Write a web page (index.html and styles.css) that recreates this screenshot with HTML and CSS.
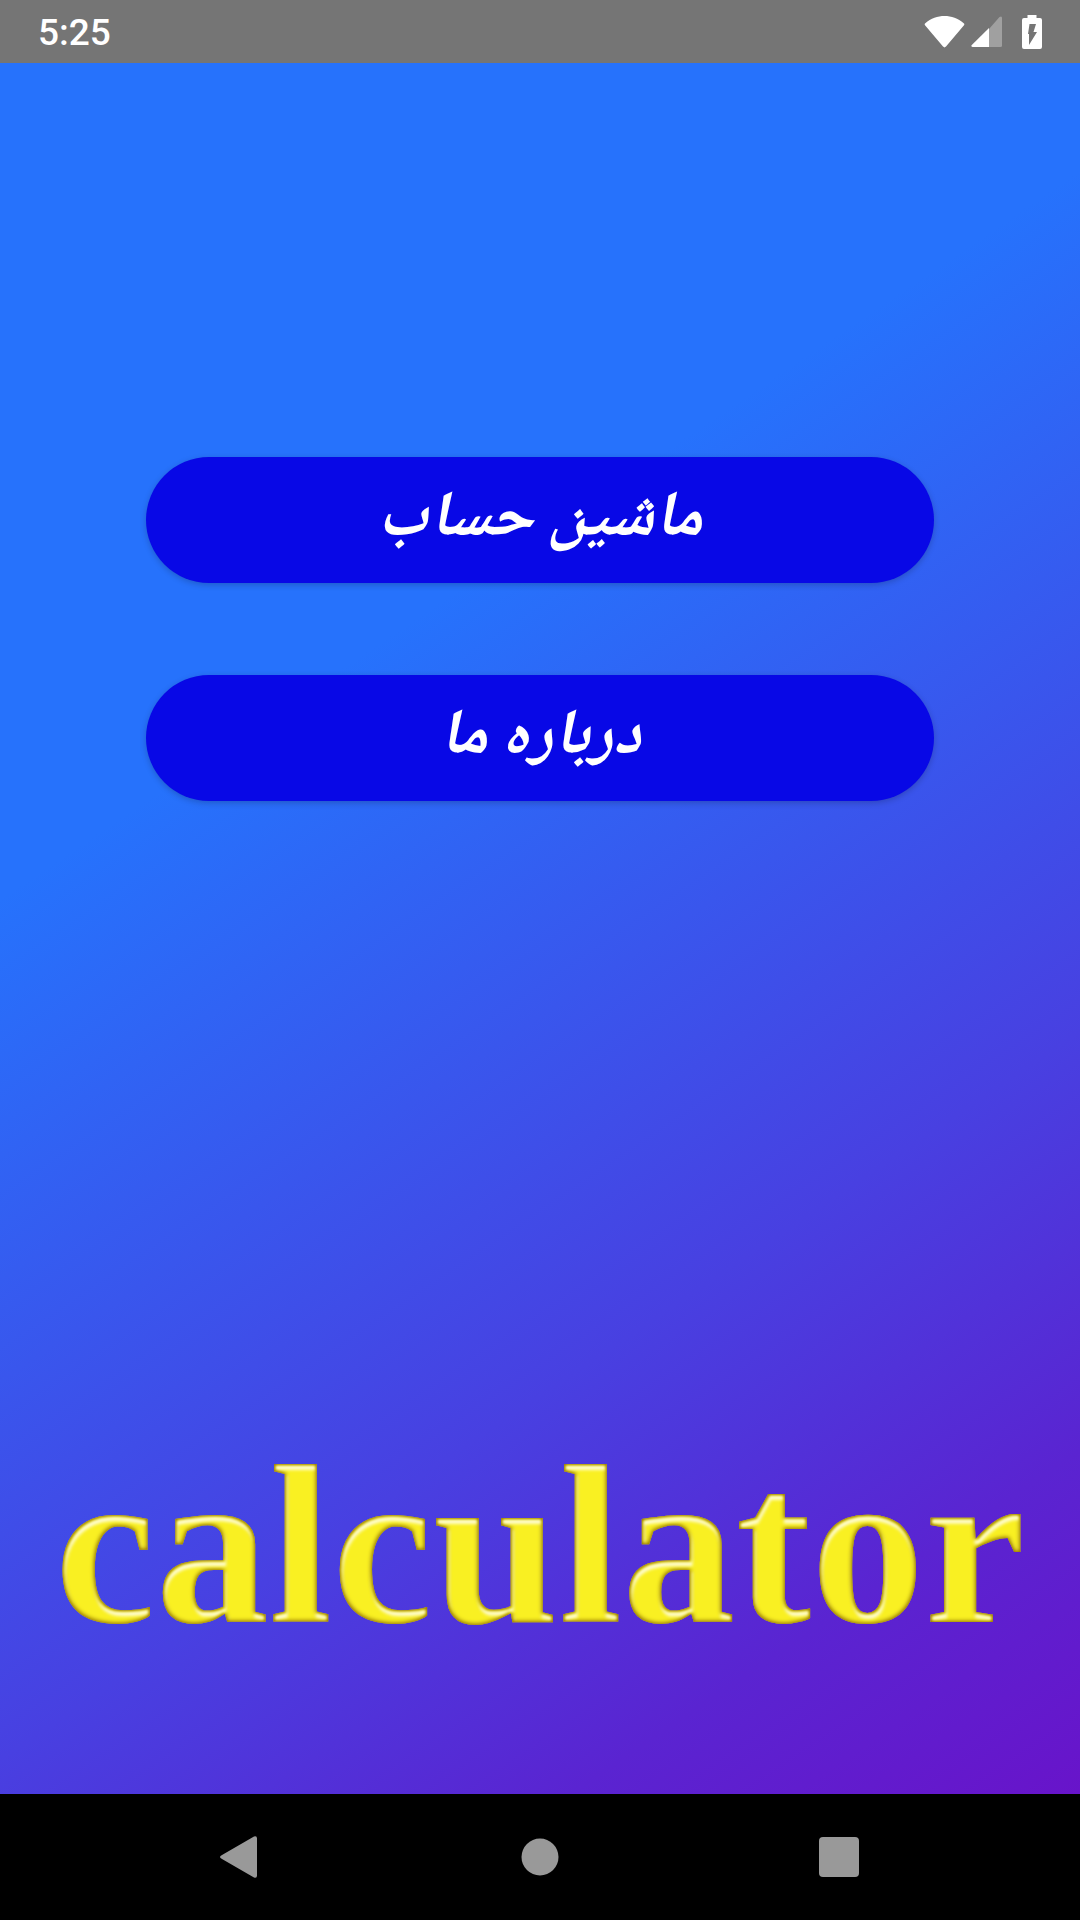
FILE: index.html
```
<!DOCTYPE html>
<html lang="fa">
<head>
    <meta charset="UTF-8">
    <meta name="viewport" content="width=device-width, initial-scale=1.0">
    <title>ماشین حساب</title>
    <link rel="stylesheet" href="styles.css">
</head>
<body>
    <header class="status-bar">
        <span class="clock">5:25</span>
        <div class="status-icons">
            <svg class="wifi" width="41" height="32" viewBox="0 0 41 32" aria-hidden="true">
                <path d="M1.2 9.6Q0 8.2 1.3 7.2C12.5 -2.3 28.5 -2.3 39.7 7.2Q41 8.2 39.8 9.6L22 30.6Q20.5 32.2 19 30.6Z" fill="#fff"/>
            </svg>
            <svg class="signal" width="31" height="32" viewBox="0 0 31 32" aria-hidden="true">
                <path d="M18 13L28.5 1Q31 -0.5 31 2V29.5Q31 31 29.5 31H18Z" fill="#a0a0a0"/>
                <path d="M18 12V31H1.5Q-0.5 30.5 0.8 29Z" fill="#fff"/>
            </svg>
            <svg class="battery" width="20" height="34" viewBox="0 0 20 34" aria-hidden="true">
                <path d="M5.5 0H14.5V3H18Q20 3 20 5V32Q20 34 18 34H2Q0 34 0 32V5Q0 3 2 3H5.5Z" fill="#fff"/>
                <path d="M7.5 9H14L11.5 17H15L7 30V19H6Z" fill="#757575"/>
            </svg>
        </div>
    </header>

    <main class="screen">
        <div class="menu" dir="rtl">
            <button class="menu-button">ماشین حساب</button>
            <button class="menu-button">درباره ما</button>
        </div>
        <h1 class="logo">calculator</h1>
    </main>

    <nav class="nav-bar">
        <button class="nav-button" aria-label="Back">
            <svg width="42" height="42" viewBox="2 0 42 42">
                <path d="M4 19L36 0.5Q39 -0.5 39 2.5V39.5Q39 42.5 36 41.5L4 23Q0 21 4 19Z"/>
            </svg>
        </button>
        <button class="nav-button" aria-label="Home">
            <svg width="38" height="38" viewBox="0 0 38 38">
                <circle cx="19" cy="19" r="18.5"/>
            </svg>
        </button>
        <button class="nav-button" aria-label="Recent apps">
            <svg width="40" height="40" viewBox="0 0 40 40">
                <rect width="40" height="40" rx="4"/>
            </svg>
        </button>
    </nav>

    <!-- bevel for the logo text -->
    <svg class="defs" width="0" height="0" aria-hidden="true">
        <filter id="bevel" x="-5%" y="-5%" width="110%" height="110%" color-interpolation-filters="sRGB">
            <!-- light along the upper edges -->
            <feMorphology in="SourceAlpha" operator="erode" radius="2" result="core"/>
            <feGaussianBlur in="core" stdDeviation="1" result="soft"/>
            <feOffset in="soft" dx="1" dy="4" result="low"/>
            <feComposite in="core" in2="low" operator="out" result="topEdge"/>
            <feFlood flood-color="#fffdd0"/>
            <feComposite in2="topEdge" operator="in"/>
            <feGaussianBlur stdDeviation="1" result="light"/>
            <!-- dark gold rim -->
            <feMorphology in="SourceAlpha" operator="erode" radius="1" result="thin"/>
            <feGaussianBlur in="thin" stdDeviation="2" result="inner"/>
            <feComposite in="SourceAlpha" in2="inner" operator="out" result="rim"/>
            <feFlood flood-color="#8c6c00"/>
            <feComposite in2="rim" operator="in" result="dark"/>
            <feMerge>
                <feMergeNode in="SourceGraphic"/>
                <feMergeNode in="dark"/>
                <feMergeNode in="light"/>
            </feMerge>
        </filter>
    </svg>
</body>
</html>
```
FILE: styles.css
```
* {
    box-sizing: border-box;
    margin: 0;
    padding: 0;
}

body {
    display: flex;
    flex-direction: column;
    min-height: 100vh;
    font-family: Roboto, sans-serif;
    background: #000;
}

button {
    border: none;
    cursor: pointer;
}

.status-bar {
    display: flex;
    justify-content: space-between;
    align-items: center;
    height: 63px;
    padding: 0 38px;
    background: #757575;
    color: #fff;
}

.clock {
    font-size: 37px;
    font-weight: 500;
    line-height: 60px;
    padding-top: 2px;
}

.status-icons {
    display: flex;
    align-items: center;
    gap: 6px;
}

.battery {
    margin-left: 14px;
}

.screen {
    flex: 1;
    display: flex;
    flex-direction: column;
    align-items: center;
    justify-content: space-between;
    padding: 394px 0 135px;
    background: linear-gradient(146deg, #2672fc 0%, #2672fc 34%, #4840e1 69%, #5a24d1 86%, #6814ca 100%);
}

.menu {
    display: flex;
    flex-direction: column;
    gap: 92px;
    width: 73%;
}

.menu-button {
    height: 126px;
    padding-top: 4px;
    border-radius: 63px;
    background: #0808e6;
    color: #fff;
    font-family: "Noto Naskh Arabic", "DejaVu Sans", sans-serif;
    font-size: 64px;
    font-style: italic;
    font-weight: bold;
    line-height: 80px;
    box-shadow: 0 2px 6px rgba(0, 0, 0, 0.2);
}

.logo {
    color: #f9f022;
    font-family: "Liberation Serif", serif;
    font-size: 227px;
    font-weight: bold;
    line-height: 226px;
    filter: url(#bevel);
}

.nav-bar {
    display: grid;
    grid-template-columns: repeat(3, 1fr);
    align-items: center;
    height: 126px;
    padding: 0 8.5%;
    background: #000;
}

.nav-button {
    display: flex;
    justify-content: center;
    align-items: center;
    height: 126px;
    background: none;
}

.nav-button svg {
    fill: #999;
}

.defs {
    position: absolute;
}
```
